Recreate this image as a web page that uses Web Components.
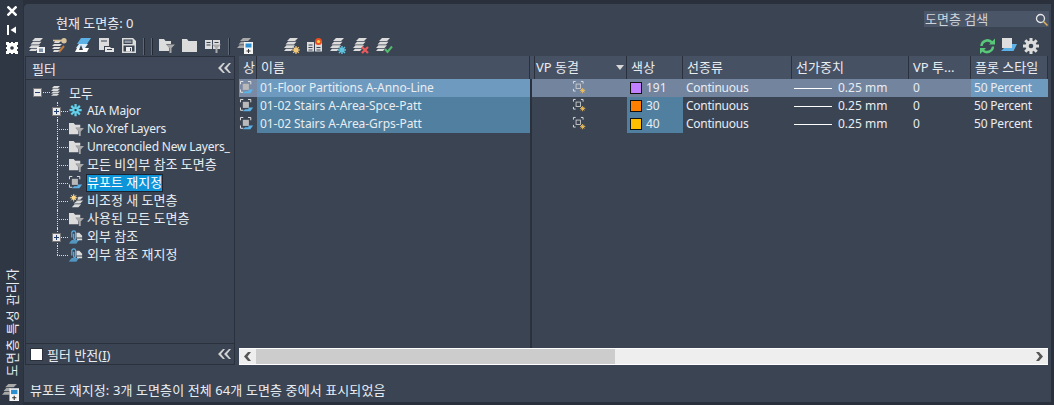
<!DOCTYPE html>
<html lang="ko"><head><meta charset="utf-8"><title>도면층 특성 관리자</title>
<style>
html,body{margin:0;padding:0;background:#2a303c}
body{width:1054px;height:405px;overflow:hidden;font:12px "Noto Sans","Noto Sans CJK KR",sans-serif;color:#e8edf2}
</style></head><body>
<x-palette></x-palette>
<script>
const L='#dcdcdc',G='#a9a9a9',B='#5cb2e6';
const stack=(c=L)=>`<path fill="${c}" d="M6 0h8l-3 3H3zM4 3.800h8.500L10 6.500H1.500zM2.500 7.300H11L8.500 10H0zM2 10.700h7L7 13H0z"/>`;
const funnel=`<path fill="${L}" d="M0 1h5l1.500 2H12v3H7l3 3.500V13H0z"/><path fill="${G}" d="M7 6.500h9l-3.500 3.500v5h-2v-5z"/>`;
const ICONS={
 newfilter:stack()+`<path fill="#f4f4f4" d="M8 9h8v6H8z"/><path fill="#7f93a8" d="M10 10.500h4V14h-4z"/>`,
 key:`<path fill="${L}" d="M3 3h6L7 5H2zM2 6h8L8 8H0zM2 9h7l-2 2H0z"/><path stroke="#d8c39a" stroke-width="1.600" d="M1 2.500h9"/><circle cx="12" cy="2.700" r="2.700" fill="#d8c39a"/><path stroke="#c07a3a" stroke-width="2" d="m12 8-5 6"/><path fill="${L}" d="M2 12h6l-2 2H1z"/>`,
 blue:`<path fill="${B}" d="M6 0h10l-4 6H2z"/><path fill="#d8edf9" d="M4 6h9l-3 4H1z"/><path fill="#fff" d="M2 10h12l-2 4H0z"/><path fill="#39424f" d="M6 7l2 5H4z"/>`,
 doc:`<path fill="${L}" d="M1 0h10v12H1z"/><path fill="#39424f" d="M3 2.500h6v1H3z"/><path fill="#39424f" d="M6 8h10v7H6z"/><path fill="#e6e6e6" d="M7 9h5l1 1h3v4H7z"/><path fill="#39424f" d="M9 11h5v1H9z"/>`,
 save:`<path fill="${L}" d="M1 0h11l3 3v12H1z"/><path fill="#3b4453" d="M2.500 1.500h9V6h-9zM2.500 7.500h11V13.500h-11z"/><path fill="#8e97a3" d="M3.500 2.500h7v2.500h-7z"/><path fill="#eee" d="M5 9h6v4.500H5z"/><path fill="#3b4453" d="M9 10h1v3H9z"/>`,
 folderf:funnel,
 folder:`<path fill="${L}" d="M0 1h5l1.500 2H15v11H0z"/>`,
 bookf:`<path fill="${L}" d="M0 2h7v9H0zM8 2h7v9H8z"/><path fill="#39424f" d="M1.500 4h4v1h-4zM1.500 6.500h4v1h-4zM9.500 4h4v1h-4z"/><path fill="${G}" d="M7 6.500h9l-3.500 3.500v5h-2v-5z"/>`,
 layerbox:`<path fill="${G}" d="M6 0h8l-3 3H3zM4 3.800h4v2.700H1.500zM2.500 7.300H7V10H0z"/><rect x="7" y="4" width="9" height="12" fill="#f4f4f4"/><rect x="8.500" y="5.500" width="6" height="4" fill="#2d8fd0"/><path fill="#333" d="M11 11h1v1.500h1.500v1H12V15h-1v-1.500H9.500v-1H11z"/>`,
 sun:stack()+`<g stroke="#f3c878" stroke-width="1.200"><path d="M12 8v8M8 12h8M9.200 9.200l5.600 5.600M14.800 9.200l-5.600 5.600"/></g><circle cx="12" cy="12" r="2.500" fill="#f3c878"/>`,
 book:`<path fill="${L}" d="M0 4h7v9.500H0zM8 4h7v9.500H8z"/><path stroke="#3b4453" d="M1.500 7h4M1.500 9.500h4M1.500 12h4M9.500 9.500h4M9.500 12h4"/><circle cx="11.500" cy="3.500" r="3.500" fill="#e9501e"/><circle cx="11.500" cy="3.500" r="1.600" fill="#ffd24a"/>`,
 freeze:stack()+`<g stroke="#5fc4e0" stroke-width="1.500"><path d="M12 8v8M8 12h8M9 9l6 6M15 9l-6 6"/></g>`,
 del:stack()+`<path stroke="#ee5a5a" stroke-width="2.200" d="m9 9 6 6M15 9l-6 6"/>`,
 check:stack()+`<path stroke="#53b96c" stroke-width="2" fill="none" d="m9 11 2.500 3L16 8.500"/>`,
 refresh:`<path fill="none" stroke="#58c878" stroke-width="2.500" d="M2.500 8A6 6 0 0 1 13 4.500M14 8.500A6 6 0 0 1 3.500 12"/><path fill="#58c878" d="M10 6.500h6V.5zM7 10H1v6z"/>`,
 square:`<rect x="1" y="0" width="10" height="10" fill="#dedede"/><path fill="#5cb2e6" d="M11 6h5l-3.500 7H0l3-3h8z"/>`,
 gear:`<g stroke="#dcdcdc" stroke-width="3"><path d="M8 0v16M0 8h16M2.300 2.300l11.400 11.400M13.700 2.300 2.300 13.700"/></g><circle cx="8" cy="8" r="5.500" fill="#dcdcdc"/><circle cx="8" cy="8" r="2.300" fill="#3b4453"/>`,
 layers:`<path fill="${L}" d="M4 0h8L9 3H1zM3 3.800h9L9 6.500H0zM3 7.300h9L9 10H0zM3 10.700h8L8 13H0z"/>`,
 snow:`<g stroke="#62d0ea" stroke-width="2.400"><path d="M7 0v13M.5 6.500h13M2.400 2l9.200 9.200M11.600 2l-9.200 9.200"/></g><circle cx="7" cy="6.500" r="1.300" fill="#2f3846"/>`,
 filter:funnel,
 vp:`<path fill="none" stroke="#e8e8e8" d="M.5 3.500v-3h3M8.500 .5h3v3M.5 9v3h3"/><rect x="3" y="3" width="6.500" height="6.500" fill="#b9b9b9"/><path fill="${B}" d="M9 9h5l-3 4H3l2.500-2H9z"/>`,
 vpsun:`<path fill="none" stroke="#e8e8e8" d="M.5 3V.5H3M9 .500h2.500V3M.5 9v2.500H3"/><rect x="3.500" y="3.500" width="5" height="5" fill="none" stroke="#cfcfcf"/><g stroke="#f3c25c"><path d="M11 8v6M8 11h6M9 9l4 4M13 9l-4 4"/></g>`,
 newlay:`<g stroke="#f3d08a" stroke-width="1"><path d="M5 0v8M1 4h8M2.200 1.200l5.600 5.600M7.800 1.200 2.200 6.800"/></g><circle cx="5" cy="4" r="2.300" fill="#ffd98a"/><path fill="${L}" d="M10 3h5l-3 3H9zM9 7h6l-3 3H5zM6 11h7l-3 3H3z"/>`,
 xref:`<path fill="none" stroke="${B}" stroke-width="1.300" d="M3 8V3a2 2 0 0 1 4 0v6a1 1 0 0 1-2 0V4"/><path fill="${L}" d="M8 3h3l3 3v2H8z"/><path fill="${B}" d="M3 11h8l-2 1.500H1z"/><path fill="${L}" d="M8 9h6v2H9z"/><path fill="${B}" d="M1 13h8l-1 1.500H0z"/>`
};
const def=(n,c)=>customElements.define(n,c);
const sh=(el,html)=>{el.attachShadow({mode:'open'}).innerHTML=html};

def('x-icon',class extends HTMLElement{connectedCallback(){
 const s=this.getAttribute('size')||16,n=this.getAttribute('name');
 sh(this,`<style>:host{display:inline-flex;flex:none;width:${s}px;height:${s}px}svg{display:block;overflow:visible}</style><svg width="${s}" height="${s}" viewBox="0 0 16 16">${ICONS[n]||''}</svg>`);
}});

def('x-collapse',class extends HTMLElement{connectedCallback(){
 sh(this,`<style>:host{display:inline-flex;width:13px;height:10px}svg{display:block}</style><svg width="13" height="10" viewBox="0 0 13 10"><path fill="#d2d2d2" d="M5 0h2L3 5l4 5H5L0 5zM11 0h2L9 5l4 5h-2L6 5z"/></svg>`);
}});

def('x-tree-row',class extends HTMLElement{connectedCallback(){
 const lv=+this.getAttribute('level')||0,ic=this.getAttribute('icon'),exp=this.getAttribute('exp'),sel=this.hasAttribute('selected'),last=this.hasAttribute('last'),ko=this.hasAttribute('ko');
 const box=exp?`<span class="box">${exp==='+'?'<i class="v"></i>':''}<i class="h"></i></span>`:'';
 sh(this,`<style>
 :host{display:flex;align-items:center;height:${lv?18:19}px;position:relative;padding-left:${lv?60:42}px;white-space:nowrap;font-size:${ko?13:12}px;letter-spacing:${ko?0:-.2}px}
 .con{position:absolute;left:${lv?31:12}px;top:9px;width:${lv?11:12}px;border-top:1px dotted #d8dce0}
 .vl{position:absolute;left:31px;top:0;height:${last?9:18}px;border-left:1px dotted #d8dce0;display:${lv?'block':'none'}}
 .box{position:absolute;left:${lv?26:7}px;top:4.500px;background:#e9e9e9;border:1px solid #777;z-index:1;width:7px;height:7px}
 .box i{position:absolute;background:#23406e}.h{left:1px;right:1px;top:3px;height:1px}.v{top:1px;bottom:1px;left:3px;width:1px}
 x-icon{position:absolute;left:${lv?43:25}px;top:${lv?2:2.500}px}
 .t{padding:0;height:18px;line-height:${ko&&lv?14:16}px;box-sizing:border-box;border:1px solid transparent}
 .sel{background:#0e94d8;border:1px dotted #f0a040;color:#fff;outline:1px solid #1d2430;outline-offset:-1px}
 </style><span class="vl"></span><span class="con"></span>${box}<x-icon name="${ic}" size="${lv?15:12}"></x-icon><span class="t ${sel?'sel':''}"><slot></slot></span>`);
}});

def('x-side',class extends HTMLElement{connectedCallback(){
 sh(this,`<style>
 :host{display:flex;flex-direction:column;align-items:center;width:23px;flex:none;background:#2f3745;box-sizing:border-box;padding-top:6px}
 svg{display:block;margin-bottom:7px}
 .sp{flex:1}
 .v{writing-mode:vertical-rl;text-orientation:sideways;transform:rotate(180deg);font-size:13px;letter-spacing:.6px;line-height:22px;white-space:nowrap;margin-bottom:8px;color:#e8edf2}
 </style>
 <svg width="10" height="10" viewBox="0 0 10 10"><path stroke="#fff" stroke-width="2.500" d="m.5.5 9 9M9.500.5l-9 9"/></svg>
 <svg width="9" height="10" viewBox="0 0 9 10" style="margin-top:2px"><path fill="#fff" d="M0 0h2v10H0zM9 1.500v7L3.500 5z"/></svg>
 <svg width="12" height="12" viewBox="0 0 12 12"><path fill="#fff" d="M0 0h3v1h2V0h2v1h2V0h3v3h-1v2h1v2h-1v2h1v3H9v-1H7v1H5v-1H3v1H0V9h1V7H0V5h1V3H0z"/><circle cx="6" cy="6" r="1.800" fill="#2f3745"/></svg>
 <span class="sp"></span>
 <span class="v">도면층 특성 관리자</span>
 <x-icon name="layerbox" size="17" style="position:relative;left:-1px;margin-bottom:4px"></x-icon>`);
}});

def('x-toolbar',class extends HTMLElement{connectedCallback(){
 const g=(names)=>names.map(n=>n==='|'?'<i class="s"></i>':`<x-icon name="${n}"></x-icon>`).join('');
 sh(this,`<style>
 :host{display:flex;align-items:center;height:22px;padding-left:5px;box-sizing:border-box;flex:none}
 .g{display:flex;align-items:center;gap:7px}
 .s{display:block;width:1px;height:17px;background:#5f6875;border-right:1px solid #232a35}
 .sp{flex:1}
 </style>
 <div class="g">${g(['newfilter','key','blue','doc','save'])}</div>
 <div class="g" style="margin-left:6px;gap:6px"><i class="s"></i><i class="s"></i></div>
 <div class="g" style="margin-left:6px">${g(['folderf','folder','bookf'])}</div>
 <div class="g" style="margin-left:7px"><i class="s"></i></div>
 <div class="g" style="margin-left:7px">${g(['layerbox'])}</div>
 <div class="g" style="margin-left:31px">${g(['sun','book','freeze','del','check'])}</div>
 <span class="sp"></span>
 <div class="g" style="margin-right:12px;gap:6px">${g(['refresh','square','gear'])}</div>`);
}});

def('x-filter-pane',class extends HTMLElement{connectedCallback(){
 sh(this,`<style>
 :host{display:flex;flex-direction:column;width:210px;flex:none;border:1px solid #2a313d;box-sizing:border-box;height:309px}
 .head{height:23px;display:flex;align-items:center;justify-content:space-between;padding:0 3px 0 6px;background:#3f4859;border-bottom:1px solid #2a313d;box-sizing:border-box;flex:none;font-size:13px}
 .tree{flex:1;padding-top:3px}
 .foot{height:21px;display:flex;align-items:center;border-top:1px solid #2a313d;padding:0 3px 0 4px;flex:none;box-sizing:border-box;font-size:13px}
 .cb{width:11px;height:11px;background:#fff;border:1px solid #2a313d;margin-right:4px}
 .sp{flex:1}
 </style>
 <div class="head"><span>필터</span><x-collapse></x-collapse></div>
 <div class="tree"><slot></slot></div>
 <div class="foot"><span class="cb"></span><span>필터 반전(<u>I</u>)</span><span class="sp"></span><x-collapse></x-collapse></div>`);
}});

const COLS='18px 273px 2px 95px 56px 109px 117px 62px 77px';
def('x-list-head',class extends HTMLElement{connectedCallback(){
 const cs=[['상'],['이름'],[''],['VP 동결',1],['색상'],['선종류'],['선가중치'],['VP 투...'],['플롯 스타일']];
 sh(this,`<style>
 :host{display:grid;grid-template-columns:${COLS};height:23px;background:#475164;flex:none;font-size:13px}
 div{border-right:1px solid #2a313d;padding-left:4px;line-height:22px;white-space:nowrap;overflow:hidden;box-sizing:border-box;position:relative}
 .a:after{content:"";position:absolute;right:2px;top:9px;border:4px solid transparent;border-top:5px solid #d8d8d8}
 </style>${cs.map(c=>`<div class="${c[1]?'a':''}">${c[0]}</div>`).join('')}`);
}});

def('x-list-row',class extends HTMLElement{connectedCallback(){
 const cur=this.hasAttribute('current'),c=this.getAttribute('color'),n=this.getAttribute('num'),name=this.getAttribute('name');
 const HI=cur?'#6f9abf':'#507f9f', GR=cur?'#73849f':'transparent';
 sh(this,`<style>
 :host{display:grid;grid-template-columns:${COLS};height:18px;flex:none}
 div{display:flex;align-items:center;white-space:nowrap;overflow:hidden;box-sizing:border-box;padding-left:3px;line-height:18px}
 .sw{width:10px;height:10px;border:1px solid #111;margin-right:4px;flex:none}
 .ln{width:38px;height:1px;background:#fff;margin-right:6px;flex:none}
 </style>
 <div style="background:${cur?'#7b8aa4':'transparent'};padding-left:1px"><x-icon name="vp" size="15"></x-icon></div>
 <div style="background:${HI};letter-spacing:-.06px">${name}</div>
 <div style="background:#2a313d;padding:0"></div>
 <div style="background:${GR};justify-content:center;padding:0"><x-icon name="vpsun" size="14"></x-icon></div>
 <div style="background:${cur?GR:HI}"><span class="sw" style="background:${c}"></span>${n}</div>
 <div style="background:${GR};letter-spacing:-.25px">Continuous</div>
 <div style="background:${GR};padding-left:2px"><span class="ln"></span>0.25 mm</div>
 <div style="background:${GR};padding-left:4px">0</div>
 <div style="background:${cur?HI:'transparent'};letter-spacing:-.2px">50 Percent</div>`);
}});

def('x-list',class extends HTMLElement{connectedCallback(){
 sh(this,`<style>
 :host{display:flex;flex-direction:column;flex:none;width:809px;height:309px;margin-left:4px;position:relative;box-sizing:border-box}
 .rows{flex:1;min-height:0;position:relative}
 .rule{position:absolute;left:291px;top:0;bottom:0;width:2px;background:#2a313d}
 .wrap{display:flex;flex-direction:column;position:relative;z-index:1}
 .bar{height:17px;display:flex;background:#eeeeee;flex:none;border-top:1px solid #fff;border-bottom:1px solid #fff;box-sizing:border-box}
 .btn{width:17px;display:flex;align-items:center;justify-content:center;flex:none}
 .th{width:359px;background:#cccccc;flex:none}
 .sp{flex:1}
 </style>
 <x-list-head></x-list-head>
 <div class="rows"><i class="rule"></i><div class="wrap"><slot></slot></div></div>
 <div class="bar"><span class="btn"><svg width="7" height="9" viewBox="0 0 7 9"><path fill="#555" d="M4 0h3L3.500 4.500 7 9H4L0 4.500z"/></svg></span><span class="th"></span><span class="sp"></span><span class="btn"><svg width="7" height="9" viewBox="0 0 7 9"><path fill="#555" d="M0 0h3l4 4.500L3 9H0l3.500-4.500z"/></svg></span></div>`);
}});

def('x-palette',class extends HTMLElement{connectedCallback(){
 sh(this,`<style>
 :host{display:flex;width:1054px;height:405px;box-sizing:border-box;padding:0;background:#2a303c}
 .main{flex:1;min-width:0;margin:3px 2px 2px 0;background:#3b4453;border-top-left-radius:5px;display:flex;flex-direction:column;border:1px solid #2a303c;box-sizing:border-box}
 .top{height:31px;display:flex;flex:none;padding:5px 2px 0 32px;justify-content:space-between;box-sizing:border-box;align-items:flex-start}
 .cur{padding-top:4px;font-size:13px}
 .search{width:125px;height:16px;background:#4a5568;color:#cdd4dc;display:flex;align-items:center;justify-content:space-between;padding:0 1px;margin-top:2px;box-sizing:border-box;line-height:16px;font-size:13px}
 .body{display:flex;flex:none;padding-left:1px;margin-top:-1px}
 .status{flex:1;display:flex;align-items:flex-end;padding:0 0 4px 6px;line-height:16px;white-space:nowrap;font-size:13px;letter-spacing:.1px}
 svg{display:block}
 </style>
 <x-side></x-side>
 <div class="main">
  <div class="top"><span class="cur">현재 도면층: 0</span>
   <div class="search"><span>도면층 검색</span><svg width="13" height="13" viewBox="0 0 13 13"><circle cx="5.500" cy="5.500" r="4" fill="none" stroke="#e6e6e6" stroke-width="1.300"/><path stroke="#e2b15c" stroke-width="1.500" d="m8.500 8.500 4 4"/></svg></div></div>
  <x-toolbar></x-toolbar>
  <div class="body">
   <x-filter-pane>
    <x-tree-row icon="layers" exp="-" ko>모두</x-tree-row>
    <x-tree-row level="1" icon="snow" exp="+">AIA Major</x-tree-row>
    <x-tree-row level="1" icon="filter">No Xref Layers</x-tree-row>
    <x-tree-row level="1" icon="filter">Unreconciled New Layers_</x-tree-row>
    <x-tree-row level="1" icon="filter" ko>모든 비외부 참조 도면층</x-tree-row>
    <x-tree-row level="1" icon="vp" selected ko>뷰포트 재지정</x-tree-row>
    <x-tree-row level="1" icon="newlay" ko>비조정 새 도면층</x-tree-row>
    <x-tree-row level="1" icon="filter" ko>사용된 모든 도면층</x-tree-row>
    <x-tree-row level="1" icon="xref" exp="+" ko>외부 참조</x-tree-row>
    <x-tree-row level="1" icon="xref" last ko>외부 참조 재지정</x-tree-row>
   </x-filter-pane>
   <x-list>
    <x-list-row current color="#c080ff" num="191" name="01-Floor Partitions A-Anno-Line"></x-list-row>
    <x-list-row color="#ff8000" num="30" name="01-02 Stairs A-Area-Spce-Patt"></x-list-row>
    <x-list-row color="#ffbf00" num="40" name="01-02 Stairs A-Area-Grps-Patt"></x-list-row>
   </x-list>
  </div>
  <div class="status">뷰포트 재지정: 3개 도면층이 전체 64개 도면층 중에서 표시되었음</div>
 </div>`);
}});
</script>
</body></html>
